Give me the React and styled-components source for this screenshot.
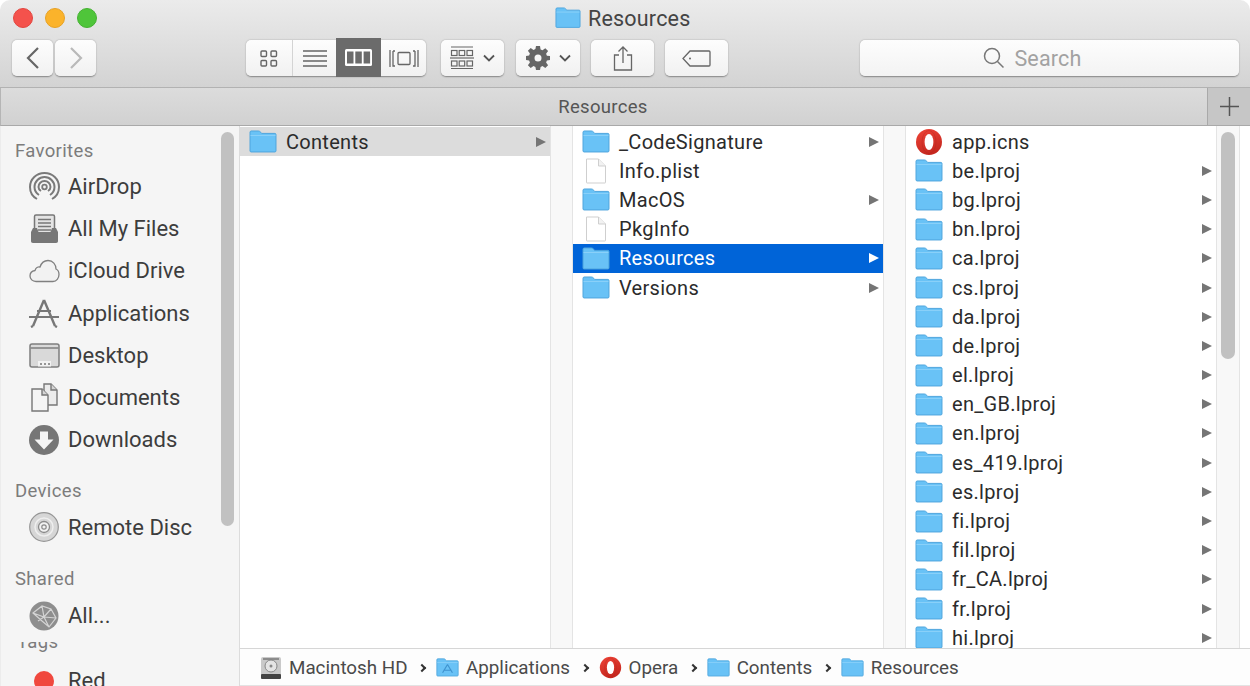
import React from "react";
import styled, { createGlobalStyle } from "styled-components";

const sans = `"Roboto", "Liberation Sans", sans-serif`;

const Global = createGlobalStyle`
  html, body {
    margin: 0;
    padding: 0;
    background: #fff;
    overflow: hidden;
  }
  * {
    box-sizing: border-box;
  }
`;

//window frame
const Window = styled.div`
  width: 1250px;
  height: 686px;
  display: flex;
  flex-direction: column;
  overflow: hidden;
  border-radius: 10px 10px 0 0;
  font-family: ${sans};
  background: #fff;
`;

const Header = styled.div`
  height: 88px;
  flex: none;
  display: flex;
  flex-direction: column;
  background: linear-gradient(#ebebeb, #d3d3d3);
  border-bottom: 1px solid #b2b2b2;
`;

const TitleRow = styled.div`
  height: 40px;
  flex: none;
  display: flex;
  align-items: center;
  padding-left: 13px;
  padding-bottom: 4px;
  position: relative;
`;

const Lights = styled.div`
  display: flex;
  gap: 12px;
`;

const Light = styled.span`
  width: 20px;
  height: 20px;
  border-radius: 50%;
  background: ${(p) => p.$color};
  border: 1px solid ${(p) => p.$edge};
`;

const Title = styled.div`
  position: absolute;
  left: 555px;
  top: 5px;
  display: flex;
  align-items: center;
  gap: 7px;
  font-size: 21.5px;
  letter-spacing: 0.2px;
  color: #444;
  height: 26px;
`;

const Toolbar = styled.div`
  display: flex;
  align-items: flex-start;
  padding-left: 12px;
`;

const Group = styled.div`
  display: flex;
  height: 36px;
`;

const ToolButton = styled.div`
  width: ${(p) => p.$width}px;
  height: 36px;
  flex: none;
  display: flex;
  align-items: center;
  justify-content: center;
  gap: ${(p) => p.$gap || 0}px;
  margin-left: ${(p) => p.$left || 0}px;
  background: linear-gradient(#fdfdfd, #f1f1f1);
  border-radius: 5px;
  box-shadow: 0 0.5px 1.5px rgba(0, 0, 0, 0.38);
  color: #666;
`;

const ViewButton = styled.div`
  width: ${(p) => p.$width}px;
  height: ${(p) => (p.$active ? 39 : 36)}px;
  margin-top: ${(p) => (p.$active ? -2 : 0)}px;
  display: flex;
  align-items: center;
  justify-content: center;
  color: ${(p) => (p.$active ? "#fff" : "#666")};
  background: ${(p) => (p.$active ? "#6b6b6b" : "transparent")};
  border-right: ${(p) => (p.$divider ? "1px solid #d4d4d4" : "none")};
`;

const ViewGroup = styled.div`
  display: flex;
  margin-left: 150px;
  height: 36px;
  background: linear-gradient(#fdfdfd, #f1f1f1);
  border-radius: 5px;
  box-shadow: 0 0.5px 1.5px rgba(0, 0, 0, 0.38);
`;

const SearchBox = styled.div`
  width: 379px;
  height: 36px;
  margin-left: 132px;
  display: flex;
  align-items: center;
  justify-content: center;
  gap: 9px;
  padding-right: 34px;
  background: linear-gradient(#fdfdfd, #f3f3f3);
  border-radius: 5px;
  box-shadow: 0 0.5px 1.5px rgba(0, 0, 0, 0.38);
  font-size: 21.5px;
  letter-spacing: 0.2px;
  color: #a2a2a2;
`;

const TabBar = styled.div`
  height: 38px;
  flex: none;
  display: flex;
  background: linear-gradient(#dcdcdc, #d1d1d1);
  border-bottom: 1px solid #a9a9a9;
  border-left: 1px solid #b5b5b5;
`;

const TabTitle = styled.div`
  flex: 1;
  display: flex;
  align-items: center;
  justify-content: center;
  padding-right: 2px;
  font-size: 18.5px;
  letter-spacing: 0.3px;
  color: #555;
`;

const AddTab = styled.div`
  width: 43px;
  display: flex;
  align-items: center;
  justify-content: center;
  background: #c6c6c6;
  border-left: 1px solid #a9a9a9;
  color: #555;
`;

const Body = styled.div`
  flex: 1;
  min-height: 0;
  display: flex;
`;

//sidebar
const Sidebar = styled.div`
  width: 240px;
  flex: none;
  position: relative;
  overflow: hidden;
  padding: 12.5px 0 0 14px;
  background: #f5f5f5;
  border-left: 1px solid #ececec;
  border-right: 1px solid #dcdcdc;
`;

const Section = styled.div`
  font-size: 18.5px;
  letter-spacing: 0.35px;
  line-height: 24px;
  height: ${(p) => p.$height || 27}px;
  color: #7c7c7c;
  margin-top: ${(p) => p.$top || 0}px;
`;

const NavItem = styled.div`
  height: 42.2px;
  display: flex;
  align-items: center;
  gap: 8px;
  padding-left: 13px;
  font-size: 22px;
  color: #3d3d3d;
`;

const NavIcon = styled.span`
  width: 32px;
  flex: none;
  display: flex;
  align-items: center;
  justify-content: center;
`;

const ClippedSection = styled.div`
  height: 10px;
  margin: 5px 0 8px;
  overflow: hidden;
  position: relative;
  font-size: 18.5px;
  letter-spacing: 0.35px;
  color: #7c7c7c;
  & > span {
    position: absolute;
    bottom: -1px;
    left: 2px;
  }
`;

const Thumb = styled.div`
  position: absolute;
  top: ${(p) => p.$top}px;
  right: ${(p) => p.$right}px;
  width: ${(p) => p.$width}px;
  height: ${(p) => p.$height}px;
  border-radius: 7px;
  background: #c1c1c1;
`;

//browser columns
const Main = styled.div`
  flex: 1;
  min-width: 0;
  display: flex;
  flex-direction: column;
`;

const Columns = styled.div`
  flex: 1;
  min-height: 0;
  display: flex;
  overflow: hidden;
  position: relative;
`;

const Column = styled.div`
  width: 310px;
  flex: none;
  padding-top: 1px;
  overflow: hidden;
  background: #fff;
`;

const Gutter = styled.div`
  width: ${(p) => p.$width}px;
  flex: none;
  background: #f8f8f8;
  border-left: 1px solid #e4e4e4;
  border-right: 1px solid #e4e4e4;
`;

const Row = styled.div`
  height: 29.2px;
  display: flex;
  align-items: center;
  padding: 0 4px 0 9px;
  gap: 9px;
  font-size: 20px;
  letter-spacing: 0.3px;
  color: ${(p) => (p.$state === "active" ? "#fff" : "#2b2b2b")};
  background: ${(p) =>
    p.$state === "active"
      ? "#0064d8"
      : p.$state === "muted"
        ? "#dcdcdc"
        : "transparent"};
  & > svg {
    flex: none;
  }
`;

const RowName = styled.span`
  flex: 1;
  white-space: nowrap;
`;

const Arrow = styled.span`
  width: 0;
  height: 0;
  flex: none;
  border-left: 10px solid ${(p) => (p.$light ? "#fff" : "#757575")};
  border-top: 5.5px solid transparent;
  border-bottom: 5.5px solid transparent;
`;

//path bar
const PathBar = styled.div`
  height: 38px;
  flex: none;
  display: flex;
  align-items: center;
  padding: 1px 0 0 20px;
  background: #fdfdfd;
  border-top: 1px solid #d6d6d6;
  border-bottom: 1px solid #e3e3e3;
  font-size: 18.8px;
  color: #4a4a4a;
`;

const Crumb = styled.div`
  display: flex;
  align-items: center;
  gap: 7px;
`;

const Sep = styled.span`
  width: 6px;
  height: 6px;
  flex: none;
  margin: 0 10.5px 0 12px;
  border-top: 2px solid #333;
  border-right: 2px solid #333;
  transform: rotate(45deg);
`;

//icons
const FolderIcon = ({ size = 28, app }) => (
  <svg width={size} height={size * 0.82} viewBox="0 0 28 23">
    <path
      d="M1 4V2.2C1 1.5 1.5 1 2.2 1h7.3c.6 0 1 .2 1.4.6L12.8 3.4H26c.6 0 1 .5 1 1V21c0 .6-.5 1-1 1H2c-.6 0-1-.4-1-1V4z"
      fill="#69c2f6"
      stroke="#4ea5dd"
      strokeWidth="1"
    />
    <path d="M1.5 5.5h25" stroke="#8ad1f9" strokeWidth="1" />
    {app && (
      <path
        d="M14 8l-6 10M14 8l6 10M9 15h10"
        stroke="#3f93cf"
        strokeWidth="1.4"
        fill="none"
      />
    )}
  </svg>
);

const FileIcon = () => (
  <svg width="28" height="26" viewBox="0 0 28 26">
    <path
      d="M4.5 1h12l7 7v16.5c0 .3-.2.5-.5.5H5c-.3 0-.5-.2-.5-.5V1z"
      fill="#fff"
      stroke="#cfcfcf"
    />
    <path d="M16.5 1v7h7" fill="#f2f2f2" stroke="#cfcfcf" />
  </svg>
);

const OperaIcon = ({ size = 28 }) => (
  <svg width={size} height={size} viewBox="0 0 28 28">
    <defs>
      <linearGradient id="operaRed" x1="0" y1="0" x2="0.4" y2="1">
        <stop offset="0" stopColor="#ef4438" />
        <stop offset="1" stopColor="#c6281f" />
      </linearGradient>
    </defs>
    <circle cx="14" cy="14" r="13" fill="url(#operaRed)" />
    <ellipse cx="14" cy="14" rx="4.4" ry="8" fill="#fff" />
    <ellipse cx="14" cy="14" rx="7" ry="11.5" fill="none" stroke="#a8221a" strokeWidth="1" opacity="0.3" />
  </svg>
);

const ChevronIcon = ({ dir, color }) => (
  <svg width="16" height="24" viewBox="0 0 16 24" fill="none" stroke={color} strokeWidth="2.2">
    <path d={dir === "left" ? "M13 2L3 12l10 10" : "M3 2l10 10L3 22"} />
  </svg>
);

const IconViewIcon = () => (
  <svg width="18" height="17" viewBox="0 0 18 17" fill="none" stroke="currentColor" strokeWidth="1.4">
    <rect x="1" y="1" width="5.5" height="5.5" rx="1" />
    <rect x="11" y="1" width="5.5" height="5.5" rx="1" />
    <rect x="1" y="10.5" width="5.5" height="5.5" rx="1" />
    <rect x="11" y="10.5" width="5.5" height="5.5" rx="1" />
  </svg>
);

const ListViewIcon = () => (
  <svg width="24" height="17" viewBox="0 0 24 17" stroke="currentColor" strokeWidth="1.4">
    <path d="M0 1h24M0 6h24M0 11h24M0 16h24" />
  </svg>
);

const ColumnViewIcon = () => (
  <svg width="27" height="17" viewBox="0 0 27 17">
    <rect x="0" y="0" width="27" height="17" rx="1.5" fill="#fff" />
    <rect x="2" y="2.5" width="6.5" height="12" fill="#6b6b6b" />
    <rect x="10.3" y="2.5" width="6.5" height="12" fill="#6b6b6b" />
    <rect x="18.6" y="2.5" width="6.5" height="12" fill="#6b6b6b" />
  </svg>
);

const CoverViewIcon = () => (
  <svg width="30" height="17" viewBox="0 0 30 17" fill="none" stroke="currentColor" strokeWidth="1.3">
    <path d="M1 0v17M4 1v15h2M26 1h-2M26 1v15h-2M29 0v17M6 1H4" />
    <rect x="9" y="2.5" width="12" height="12" rx="1" />
  </svg>
);

const ArrangeIcon = () => (
  <svg width="24" height="24" viewBox="0 0 24 24" fill="none" stroke="currentColor" strokeWidth="1.2">
    <path d="M1 1h22M1 22.5h22" />
    <rect x="1.5" y="4.5" width="5.5" height="5" />
    <rect x="9.2" y="4.5" width="5.5" height="5" />
    <rect x="17" y="4.5" width="5.5" height="5" />
    <path d="M0 12h24" />
    <rect x="1.5" y="15" width="5.5" height="5" />
    <rect x="9.2" y="15" width="5.5" height="5" />
    <rect x="17" y="15" width="5.5" height="5" />
  </svg>
);

const SmallChevron = () => (
  <svg width="12" height="8" viewBox="0 0 12 8" fill="none" stroke="#555" strokeWidth="1.8">
    <path d="M1 1.5l5 5 5-5" />
  </svg>
);

const GearIcon = () => (
  <svg width="24" height="24" viewBox="0 0 24 24" fill="#666">
    <path
      fillRule="evenodd"
      d="M10 0h4l.6 3.4 1.9.8L19.3 2.2l2.8 2.8-2 2.8.8 1.9L24 10v4l-3.1.6-.8 1.9 2 2.8-2.8 2.8-2.8-2-1.9.8L14 24h-4l-.6-3.1-1.9-.8-2.8 2-2.8-2.8 2-2.8-.8-1.9L0 14v-4l3.1-.6.8-1.9-2-2.8 2.8-2.8 2.8 2 1.9-.8zM12 8.5a3.5 3.5 0 1 0 0 7 3.5 3.5 0 0 0 0-7z"
    />
  </svg>
);

const ShareIcon = () => (
  <svg width="20" height="25" viewBox="0 0 20 25" fill="none" stroke="#666" strokeWidth="1.3">
    <path d="M6 9H1.5v15h17V9H14" />
    <path d="M10 17V1M5.5 5.5L10 1l4.5 4.5" />
  </svg>
);

const TagIcon = () => (
  <svg width="29" height="17" viewBox="0 0 29 17" fill="none" stroke="#666" strokeWidth="1.3">
    <path d="M8 1h19c.6 0 1 .4 1 1v13c0 .6-.4 1-1 1H8L1 8.5z" />
    <circle cx="8" cy="8.5" r="1" fill="#666" stroke="none" />
  </svg>
);

const SearchIcon = () => (
  <svg width="22" height="22" viewBox="0 0 22 22" fill="none" stroke="#777" strokeWidth="1.5">
    <circle cx="9" cy="9" r="7.5" />
    <path d="M14.5 14.5l6 6" />
  </svg>
);

const PlusIcon = () => (
  <svg width="19" height="19" viewBox="0 0 19 19" stroke="#555" strokeWidth="1.5">
    <path d="M9.5 0v19M0 9.5h19" />
  </svg>
);

const AirDropIcon = () => (
  <svg width="31" height="30" viewBox="0 0 31 30" fill="none" stroke="#7a7a7a">
    <path strokeWidth="2" d="M8 27C3.5 24.5 1 20 1 15 1 7 7.5 1 15.5 1S30 7 30 15c0 5-2.5 9.5-7 12" />
    <path strokeWidth="2" d="M10 23c-3-2-4.5-5-4.5-8 0-5.5 4.5-10 10-10s10 4.5 10 10c0 3-1.5 6-4.5 8" />
    <path strokeWidth="2" d="M12 19c-1.5-1-2.5-2.5-2.5-4 0-3.3 2.7-6 6-6s6 2.7 6 6c0 1.5-1 3-2.5 4" />
    <circle cx="15.5" cy="15" r="2.3" strokeWidth="1.8" />
  </svg>
);

const AllFilesIcon = () => (
  <svg width="31" height="30" viewBox="0 0 31 30">
    <rect x="5.5" y="1" width="20" height="19" rx="1.5" fill="#e4e4e4" stroke="#777" strokeWidth="1.5" />
    <path d="M9 5.5h13M9 9h13M9 12.5h13M9 16h13" stroke="#777" strokeWidth="1.3" />
    <path d="M4 14h4l1.5 4h12l1.5-4h4l2 4v9c0 1-.6 2-2 2H4c-1.4 0-2-1-2-2v-9z" fill="#777" />
  </svg>
);

const CloudIcon = () => (
  <svg width="31" height="24" viewBox="0 0 31 24" fill="#f2f2f2" stroke="#808080" strokeWidth="1.3">
    <path d="M7 22.5C3.5 22.5 1 20 1 17c0-2.8 2-5 5-5.5C6.8 9 9 7.5 11 8c1.3-4 4.5-6.5 8-6.5 5 0 8 4 8 8.5 2 .8 3 3 3 5.5 0 3.5-2.5 7-6 7z" />
  </svg>
);

const AppsIcon = () => (
  <svg width="32" height="30" viewBox="0 0 32 30" fill="none" stroke="#777">
    <path strokeWidth="2.4" d="M16 2L5 28M16 2l11 26" />
    <path strokeWidth="1.8" d="M1 19h30M9 13h14" />
    <path strokeWidth="2.4" d="M5 28l-2 1M27 28l2 1" />
  </svg>
);

const DesktopIcon = () => (
  <svg width="31" height="25" viewBox="0 0 31 25">
    <rect x="1" y="1" width="29" height="23" rx="2" fill="#d9d9d9" stroke="#7e7e7e" strokeWidth="1.5" />
    <path d="M1.5 5h28" stroke="#7e7e7e" strokeWidth="1.5" />
    <path d="M9 18h13v5.5H9z" fill="#f2f2f2" />
    <path d="M11 21h2M15 21h2M19 21h2" stroke="#777" strokeWidth="1.5" />
  </svg>
);

const DocumentsIcon = () => (
  <svg width="29" height="29" viewBox="0 0 29 29" stroke="#777" strokeWidth="1.4">
    <path d="M14 1h7l6 6v15H14z" fill="#ececec" />
    <path d="M21 1v6h6" fill="#d5d5d5" />
    <path d="M2 6h10l6 6v16H2z" fill="#f5f5f5" />
    <path d="M12 6v6h6" fill="#d5d5d5" />
  </svg>
);

const DownloadsIcon = () => (
  <svg width="30" height="30" viewBox="0 0 30 30">
    <circle cx="15" cy="15" r="15" fill="#767676" />
    <path d="M11 6.5h8v8h5.5L15 24.5 5.5 14.5H11z" fill="#f5f5f5" />
  </svg>
);

const DiscIcon = () => (
  <svg width="30" height="30" viewBox="0 0 30 30" fill="none">
    <circle cx="15" cy="15" r="14.3" fill="#d6d6d6" stroke="#969696" strokeWidth="1.2" />
    <circle cx="15" cy="15" r="9" stroke="#eee" strokeWidth="1.5" />
    <circle cx="15" cy="15" r="5.5" fill="#f2f2f2" stroke="#8b8b8b" strokeWidth="1.3" />
    <circle cx="15" cy="15" r="2.2" stroke="#8b8b8b" strokeWidth="1.2" />
  </svg>
);

const NetworkIcon = () => (
  <svg width="30" height="30" viewBox="0 0 30 30" fill="none">
    <circle cx="15" cy="15" r="14.5" fill="#8e8e8e" />
    <path
      d="M4 12l9-7 9 3 5 9-7 9-7-6-9-8zM13 5l2 11 5 10M22 8l-7 8-11-4M15 16l12 1M15 16l-6 4"
      stroke="#d4d4d4"
      strokeWidth="1.2"
    />
  </svg>
);

const TagDot = () => (
  <svg width="30" height="24" viewBox="0 0 30 24">
    <circle cx="15" cy="12" r="10" fill="#f0483e" />
  </svg>
);

const DriveIcon = () => (
  <svg width="22" height="24" viewBox="0 0 22 24">
    <rect x="1" y="1" width="20" height="22" rx="2" fill="#c9c9c9" />
    <rect x="1" y="18" width="20" height="5" rx="1" fill="#444" />
    <circle cx="11" cy="10" r="6" fill="#e4e4e4" stroke="#888" />
    <circle cx="11" cy="10" r="1.5" fill="#888" />
    <path d="M3 3h16" stroke="#777" strokeWidth="1.5" />
  </svg>
);

const favorites = [
  ["AirDrop", <AirDropIcon key="a" />],
  ["All My Files", <AllFilesIcon key="b" />],
  ["iCloud Drive", <CloudIcon key="c" />],
  ["Applications", <AppsIcon key="d" />],
  ["Desktop", <DesktopIcon key="e" />],
  ["Documents", <DocumentsIcon key="f" />],
  ["Downloads", <DownloadsIcon key="g" />],
];

const middle = [
  { name: "_CodeSignature", folder: true },
  { name: "Info.plist" },
  { name: "MacOS", folder: true },
  { name: "PkgInfo" },
  { name: "Resources", folder: true, state: "active" },
  { name: "Versions", folder: true },
];

const locales = [
  "be", "bg", "bn", "ca", "cs", "da", "de", "el", "en_GB", "en",
  "es_419", "es", "fi", "fil", "fr_CA", "fr", "hi",
];

function App() {
  return (
    <Window>
      <Global />
      <Header>
        <TitleRow>
          <Lights>
            <Light $color="#f4524c" $edge="#e2463f" />
            <Light $color="#fbb32b" $edge="#e6a125" />
            <Light $color="#4fc53a" $edge="#45b132" />
          </Lights>
          <Title>
            <FolderIcon size={26} />
            Resources
          </Title>
        </TitleRow>
        <Toolbar>
          <Group>
            <ToolButton $width={41}>
              <ChevronIcon dir="left" color="#666" />
            </ToolButton>
            <ToolButton $width={41} $left={2}>
              <ChevronIcon dir="right" color="#b9b9b9" />
            </ToolButton>
          </Group>
          <ViewGroup>
            <ViewButton $width={47} $divider>
              <IconViewIcon />
            </ViewButton>
            <ViewButton $width={43}>
              <ListViewIcon />
            </ViewButton>
            <ViewButton $width={45} $active>
              <ColumnViewIcon />
            </ViewButton>
            <ViewButton $width={45}>
              <CoverViewIcon />
            </ViewButton>
          </ViewGroup>
          <ToolButton $width={63} $left={15} $gap={9}>
            <ArrangeIcon />
            <SmallChevron />
          </ToolButton>
          <ToolButton $width={64} $left={12} $gap={9}>
            <GearIcon />
            <SmallChevron />
          </ToolButton>
          <ToolButton $width={63} $left={11}>
            <ShareIcon />
          </ToolButton>
          <ToolButton $width={63} $left={11}>
            <TagIcon />
          </ToolButton>
          <SearchBox>
            <SearchIcon />
            Search
          </SearchBox>
        </Toolbar>
      </Header>
      <TabBar>
        <TabTitle>Resources</TabTitle>
        <AddTab>
          <PlusIcon />
        </AddTab>
      </TabBar>
      <Body>
        <Sidebar>
          <Section>Favorites</Section>
          {favorites.map(([name, icon]) => (
            <NavItem key={name}>
              <NavIcon>{icon}</NavIcon>
              {name}
            </NavItem>
          ))}
          <Section $top={18.5}>Devices</Section>
          <NavItem>
            <NavIcon>
              <DiscIcon />
            </NavIcon>
            Remote Disc
          </NavItem>
          <Section $top={18} $height={28}>
            Shared
          </Section>
          <NavItem>
            <NavIcon>
              <NetworkIcon />
            </NavIcon>
            All...
          </NavItem>
          <ClippedSection>
            <span>Tags</span>
          </ClippedSection>
          <NavItem>
            <NavIcon>
              <TagDot />
            </NavIcon>
            Red
          </NavItem>
          <Thumb $top={6} $right={5} $width={13} $height={394} />
        </Sidebar>
        <Main>
          <Columns>
            <Column>
              <Row $state="muted">
                <FolderIcon />
                <RowName>Contents</RowName>
                <Arrow />
              </Row>
            </Column>
            <Gutter $width={23} />
            <Column>
              {middle.map((item) => (
                <Row key={item.name} $state={item.state}>
                  {item.folder ? <FolderIcon /> : <FileIcon />}
                  <RowName>{item.name}</RowName>
                  {item.folder && <Arrow $light={item.state === "active"} />}
                </Row>
              ))}
            </Column>
            <Gutter $width={23} />
            <Column>
              <Row>
                <OperaIcon />
                <RowName>app.icns</RowName>
              </Row>
              {locales.map((code) => (
                <Row key={code}>
                  <FolderIcon />
                  <RowName>{code}.lproj</RowName>
                  <Arrow />
                </Row>
              ))}
            </Column>
            <Gutter $width={24} />
            <Thumb $top={6} $right={15} $width={14} $height={227} />
          </Columns>
          <PathBar>
            <Crumb>
              <DriveIcon />
              Macintosh HD
            </Crumb>
            <Sep />
            <Crumb>
              <FolderIcon size={23} app />
              Applications
            </Crumb>
            <Sep />
            <Crumb>
              <OperaIcon size={23} />
              Opera
            </Crumb>
            <Sep />
            <Crumb>
              <FolderIcon size={23} />
              Contents
            </Crumb>
            <Sep />
            <Crumb>
              <FolderIcon size={23} />
              Resources
            </Crumb>
          </PathBar>
        </Main>
      </Body>
    </Window>
  );
}

export default App;
